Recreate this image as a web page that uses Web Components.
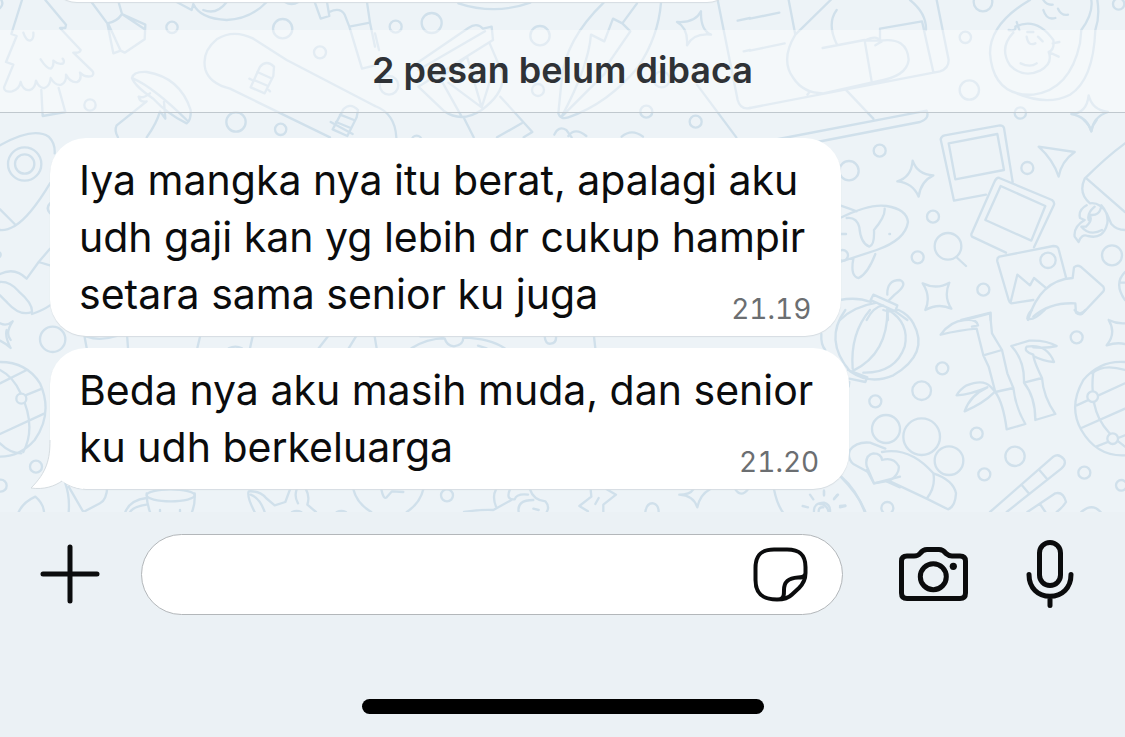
<!DOCTYPE html>
<html lang="id">
<head>
<meta charset="utf-8">
<meta name="viewport" content="width=device-width, initial-scale=1">
<title>Chat</title>
<style>
  body { margin: 0; background: #ebf1f5; font-family: Inter, "Liberation Sans", sans-serif; color: #0b0c0d; }
</style>
</head>
<body>
<chat-screen>
  <chat-bubble></chat-bubble>
  <unread-banner>2 pesan belum dibaca</unread-banner>
  <chat-bubble time="21.19">Iya mangka nya itu berat, apalagi aku<br>udh gaji kan yg lebih dr cukup hampir<br>setara sama senior ku juga</chat-bubble>
  <chat-bubble time="21.20" tail>Beda nya aku masih muda, dan senior<br>ku udh berkeluarga</chat-bubble>
  <chat-composer slot="footer"></chat-composer>
</chat-screen>

<template id="wallpaper">
  <style>
    :host { display: block; overflow: hidden; }
    svg { display: block; width: 100%; height: 100%; fill: none; stroke: #d0e0eb; stroke-width: 7; stroke-linecap: round; stroke-linejoin: round; }
  </style>
  <svg viewBox="0 0 1125 512" preserveAspectRatio="xMinYMax slice" aria-hidden="true">
    <!-- tree, brush, mushroom, skateboard -->
    <g transform="scale(.33333)">
      <path d="M66 0L34 102L50 108L18 186L40 194L12 262Q12 278 36 274Q58 268 62 246Q70 274 90 270Q106 264 108 242Q118 266 134 264Q150 258 152 234Q166 258 184 254Q200 246 198 224Q212 250 232 246Q246 238 240 218Q256 234 276 228Q284 220 276 212L220 158Q240 160 242 150L180 84H196L198 74L136 0"/>
      <path d="M70 98Q78 122 90 122Q102 118 100 98M122 178Q140 206 152 206Q162 200 160 182Q176 196 190 190Q194 182 188 176M124 270L128 348L196 336L176 264M0 24Q12 14 4 0"/>
      <path d="M270 0L322 70L340 160L362 152L374 158L434 118L436 74L366 42L354 0M322 70Q350 66 366 42L432 86M326 74L362 152"/>
      <path d="M396 234Q400 214 440 216Q540 232 572 330Q574 360 560 370Q500 340 460 296Q406 260 396 234ZM400 236Q460 262 560 360M450 280Q430 296 416 290Q420 308 440 304L350 376Q342 392 354 412M440 412Q470 370 480 334L496 356L492 306"/>
      <path d="M760 116Q700 86 650 118Q604 156 616 208Q628 250 690 266L990 412M760 116L860 180L1125 318M780 200Q800 178 822 200L820 228L794 280L752 262ZM772 216L812 234M762 240L804 258M748 236L756 240M806 270L810 274M1030 328Q1050 306 1074 330L1070 352L1042 408L998 388ZM1020 344L1062 360M1008 366L1052 384M992 366L1058 402"/>
      <path d="M530 6L575 30L580 12Q600 56 680 60Q750 58 800 6M610 30Q650 46 680 6M855 6Q875 18 895 6M942 0L962 56L988 48L980 0M988 36Q1020 20 1034 44L1048 80L1110 68L1100 0M1048 80L1086 206L1125 196M1110 68L1125 140"/>
      <circle cx="516" cy="82" r="17"/><circle cx="848" cy="86" r="29"/><circle cx="960" cy="157" r="18"/><circle cx="270" cy="315" r="17"/><circle cx="708" cy="366" r="29"/><circle cx="842" cy="388" r="17"/>
    </g>
    <!-- cup, rocket, sparkle -->
    <g transform="translate(375 0) scale(.33333)">
      <path d="M250 10Q360 46 466 8M110 200L280 84Q306 66 324 86L350 80L354 120L130 260M130 210L330 94M130 260L208 334Q260 370 320 330Q400 270 378 210L344 130M196 236L260 350M276 170L320 322L220 248M276 170L190 240M320 322L346 240M0 318Q60 340 64 412M268 356L296 412M376 290L472 396L446 412M366 412L440 370"/>
      <path d="M686 8Q570 120 560 240L550 340Q556 360 580 352Q700 310 790 200Q850 110 858 8M786 10L742 70L714 56L688 124L648 104Q640 200 560 350M742 70L766 94L700 190L690 220L560 350"/>
      <path d="M906 66Q960 70 978 34Q976 90 1008 104Q956 98 936 136Q940 84 906 66ZM1028 0L1088 300Q1096 330 1125 324M1088 62L1125 54M1106 154L1125 150M966 254L1084 412M538 404Q550 376 574 390L590 412M580 408Q600 380 634 408M740 410Q770 384 804 410M0 100L12 150"/>
      <circle cx="62" cy="80" r="18"/><circle cx="170" cy="69" r="30"/><circle cx="495" cy="107" r="29"/><circle cx="42" cy="256" r="28"/><circle cx="489" cy="270" r="18"/><circle cx="814" cy="335" r="18"/><circle cx="962" cy="365" r="18"/><circle cx="860" cy="238" r="24"/><circle cx="125" cy="422" r="15"/>
    </g>
    <!-- laptop, peanut -->
    <g transform="translate(750 0) scale(.33333)">
      <path d="M116 0L136 104L242 0M0 56L88 38M0 152L104 130M136 104Q90 180 130 234Q160 280 220 280L380 244Q470 230 476 180Q472 110 390 122L344 122L366 250M218 144L344 120M260 30Q230 70 260 132M344 122Q380 104 390 122L390 86L516 64L550 216M376 136L396 124M480 0Q530 40 528 90M560 0L596 180Q596 206 570 214L0 324M172 284L180 274M290 272L370 356M70 420L530 332Q540 356 510 366L170 432"/>
      <path d="M840 0Q720 70 720 160Q730 290 850 284Q960 270 990 130L994 90Q1030 40 1024 0M1042 0Q1050 50 1036 90Q1030 240 960 284Q890 320 790 276M776 90Q800 94 796 80Q860 50 910 120Q914 150 896 156Q910 190 870 212Q820 236 780 196Q746 144 790 98M800 66L808 90M908 130L928 126M896 156L926 170M830 110Q834 140 856 130M832 96H850M864 110L878 124M812 190Q840 204 860 190M880 0Q890 16 908 14M880 30Q890 62 916 54M924 26Q934 48 954 44"/>
      <circle cx="699" cy="6" r="28"/><circle cx="646" cy="112" r="17"/><circle cx="658" cy="270" r="29"/><circle cx="811" cy="339" r="17"/><circle cx="1106" cy="12" r="17"/>
      <path d="M964 342Q1010 340 1016 286Q1026 330 1074 336Q1030 350 1024 394Q1010 350 964 342Z"/>
    </g>
    <!-- photos, plane, magnifier, picture, arrow, rocket nose -->
    <g transform="translate(820 120) scale(.33333)">
      <path d="M374 46L540 16Q550 16 552 24L578 186M498 224L402 242L362 58Q364 48 374 46M386 70L532 42L552 150L406 178ZM538 174L696 240Q704 246 702 254L642 382M558 398L456 350Q452 344 456 338L522 188Q530 170 538 174M542 198L676 258L634 362L496 300ZM656 80L764 96Q724 124 716 170Q700 120 656 80Z"/>
      <path d="M232 184Q274 172 278 122Q292 164 340 166Q302 184 296 230Q278 188 232 184ZM308 490Q350 510 388 488Q370 530 394 566Q356 548 316 570Q334 530 308 490ZM792 0Q808 14 814 34Q818 14 830 0"/>
      <path d="M60 256Q90 266 110 274M60 294Q150 250 200 258Q260 268 264 306Q256 360 170 390L60 426M80 294Q110 290 118 322Q122 370 148 380Q164 376 162 330Q196 290 194 266M100 416Q90 470 116 474Q144 460 166 402M62 342H78M208 342H210"/>
      <path d="M412 414L438 438M538 410L700 378Q714 378 716 388L738 472M640 540L574 550Q568 548 566 540L532 424Q530 414 538 410M572 546L592 464L630 496L642 474L676 502M624 600Q660 480 758 474L762 442Q772 434 782 440L850 500Q854 508 850 514L786 582Q776 586 768 578L766 550Q690 546 640 590"/>
      <path d="M915 70Q860 110 794 176Q774 220 810 250Q840 246 860 280L874 312Q890 330 915 330M800 176L915 276M800 256Q774 270 780 294L794 300Q760 320 764 350L776 366Q784 340 804 348Q850 360 862 310Q866 280 844 256Q840 290 808 284Q820 300 798 320H784Q810 350 846 330M824 260Q800 280 806 300"/>
      <path d="M202 524Q200 480 240 480Q266 492 224 524L206 542M152 540L160 524L232 556L226 574ZM60 540Q110 530 152 546M170 548Q100 560 60 600M202 566L204 600M140 600Q160 560 190 556M226 574L262 600M424 600L512 578V600M915 456Q880 490 915 540M900 488H915"/>
      <circle cx="384" cy="379" r="40"/><circle cx="684" cy="421" r="23"/><circle cx="87" cy="152" r="29"/><circle cx="179" cy="92" r="18"/><circle cx="339" cy="290" r="18"/><circle cx="293" cy="412" r="18"/><circle cx="622" cy="144" r="18"/><circle cx="490" cy="509" r="18"/><circle cx="876" cy="406" r="30"/><circle cx="68" cy="406" r="16"/>
    </g>
    <!-- lantern, bamboo, ball, bandage, pencils -->
    <g transform="translate(820 310) scale(.33333)">
      <path d="M76 0Q10 90 90 184Q150 226 220 196Q330 130 280 40Q266 14 236 0M202 0Q204 130 100 182M150 0Q90 70 98 176M206 0Q270 40 254 110Q226 190 130 188M84 180L142 202L136 216L88 206M4 72Q2 104 16 120M86 230L88 216M190 0Q210 8 232 0"/>
      <path d="M362 74Q390 34 434 30L510 10L516 70L546 120L490 136L470 56Q420 60 362 74M434 30Q470 26 474 46L456 50M490 136L506 170L526 246L580 234L562 190L546 120M526 246Q550 280 560 358L616 342Q586 290 580 234M526 246L512 230Q490 206 440 226Q420 238 410 256Q450 254 502 232Q450 256 434 304Q490 280 522 248M574 108L628 92Q680 90 710 108Q680 116 640 112M574 108Q614 150 612 218L666 204Q640 150 640 134Q610 124 620 110Q680 100 702 156Q670 154 640 138M612 218Q646 260 646 330L706 312Q670 260 666 204"/>
      <path d="M915 156Q840 150 790 210Q744 290 784 360Q830 440 915 436M770 286L915 220M784 354L915 296M820 184Q810 270 838 326Q860 370 915 410M816 190Q850 160 915 180M828 410L915 376M866 30Q890 42 915 40M866 30Q890 70 860 106Q890 96 915 102M622 26Q624 10 636 0M622 26Q640 34 674 0M764 0Q780 20 796 0"/>
      <path d="M144 486L100 462Q80 444 90 420Q110 394 150 398L196 416M186 426Q270 410 340 490Q348 530 320 566L210 514M340 490Q400 510 408 550Q406 590 384 598L320 566M162 520L140 468Q134 436 160 430Q184 430 186 450Q220 440 236 468Q240 490 210 512Z"/>
      <path d="M510 606L700 440Q716 428 732 448Q740 462 724 476L560 606M658 480L682 508M606 526L628 552M622 606L706 550Q730 544 738 576Q730 590 710 606M660 582L676 606M64 500Q110 540 134 606M12 542V556M52 554L42 566M60 588L76 586M0 582Q20 582 26 606M784 606Q816 578 842 606"/>
      <circle cx="198" cy="357" r="42"/><circle cx="305" cy="380" r="55"/><circle cx="387" cy="452" r="43"/><circle cx="367" cy="175" r="18"/><circle cx="305" cy="242" r="28"/><circle cx="166" cy="274" r="18"/><circle cx="770" cy="82" r="18"/><circle cx="470" cy="371" r="18"/><circle cx="585" cy="439" r="29"/><circle cx="493" cy="493" r="18"/><circle cx="793" cy="488" r="18"/><circle cx="904" cy="526" r="16"/><circle cx="202" cy="594" r="18"/>
      <g fill="#edf3f7"><circle cx="818" cy="260" r="16"/><circle cx="878" cy="386" r="16"/></g>
    </g>
    <!-- fish and leaves on the left edge -->
    <g transform="translate(0 120) scale(.33333)">
      <path d="M0 76Q100 20 146 50Q166 70 164 100M150 190Q90 290 44 318Q20 332 0 330M0 268L44 312M150 386L116 426L80 476Q44 440 0 462M116 426L150 436M0 486Q30 484 56 514Q98 550 96 576Q60 590 22 548L0 526M96 582Q130 570 150 556M0 610Q20 620 38 604Q14 640 32 660M150 250Q136 264 150 280M0 398Q4 404 0 410"/>
      <circle cx="74" cy="132" r="50"/><circle cx="74" cy="132" r="29"/><circle cx="158" cy="658" r="38"/>
    </g>
    <g transform="translate(0 330) scale(.33333)">
      <path d="M20 0Q14 20 32 54Q20 42 0 32M0 96Q80 96 120 160Q160 250 104 330Q60 380 0 380M0 160L80 120M76 196L126 176M0 312L134 250M0 120Q40 140 62 190Q110 290 70 366M0 340Q30 370 64 370M56 546Q70 516 106 500Q130 520 132 546M196 460Q210 500 206 546M206 470L250 546L300 520Q320 510 322 470M250 0L260 54M380 0L384 54M260 20Q300 34 350 18M600 20L592 54M376 546Q390 510 440 504M440 490Q440 520 450 546M584 490Q586 520 576 546M480 546V540M540 546V540M390 546Q400 530 440 524"/>
      <ellipse cx="512" cy="496" rx="72" ry="18"/><circle cx="108" cy="410" r="18"/><circle cx="2" cy="467" r="18"/>
      <circle cx="64" cy="206" r="15" fill="#edf3f7"/>
    </g>
    <!-- slivers below and between the bubbles -->
    <g transform="translate(200 470) scale(.33333)">
      <path d="M164 126Q140 80 146 64Q180 62 198 84L224 106L256 96L270 58M152 74Q180 84 194 126M290 58Q282 80 294 100M318 58Q330 80 322 104L348 126M460 58Q470 100 514 126M670 58Q660 100 620 126M544 58Q550 90 560 82L576 64L610 66M792 126Q840 118 880 120L934 90M888 58Q876 80 888 110M930 58Q916 90 944 88Q950 70 984 74M1000 90Q950 90 956 126M990 58Q1000 90 1036 94Q1050 110 1040 126M1000 116L1016 120M276 126Q290 120 304 126M410 126Q424 120 438 126"/>
      <circle cx="741" cy="76" r="18"/>
    </g>
    <g transform="translate(550 470) scale(.33333)">
      <path d="M122 58L124 80L88 108L114 124M170 58L198 74L160 104V126M136 102L146 84M388 74Q420 74 430 58M480 58Q450 74 442 112Q430 76 388 74M286 126Q290 98 310 100Q326 104 326 126M556 58Q574 84 594 58M672 58Q680 100 698 126M870 18Q930 80 946 126M822 62V76M780 74L790 88M864 74L852 88M758 108L774 112M886 108L870 112M792 126Q790 98 822 98Q842 104 840 126M806 124Q806 110 820 112M950 0L972 40L1050 20M1010 34L1050 52"/>
    </g>
    <g transform="translate(200 325) scale(.33333)">
      <path d="M158 34L150 70M86 70Q106 60 126 70M384 34L356 70M468 34L446 70M524 34L530 70M634 70Q680 40 734 40Q740 62 762 64Q790 60 790 38Q870 40 914 70M660 34H730M834 62L860 70M1034 34Q1036 58 1052 56Q1070 54 1068 34M1182 34L1186 70"/>
    </g>
  </svg>
</template>

<template id="screen">
  <style>
    :host { display: flex; flex-direction: column; min-height: 100vh; }
    main { position: relative; flex: 1 0 0; display: flex; flex-direction: column; justify-content: flex-end; overflow: hidden; background: #edf3f7; min-height: 480px; }
    chat-wallpaper { position: absolute; inset: 0; }
    .thread { position: relative; display: flex; flex-direction: column; gap: 12px; padding-bottom: 23px; }
  </style>
  <main>
    <chat-wallpaper></chat-wallpaper>
    <div class="thread"><slot></slot></div>
  </main>
  <slot name="footer"></slot>
</template>

<template id="banner">
  <style>
    :host { display: block; margin: 16px 0 13px; padding: 20px 0 21px; border-bottom: 1px solid #c0c8ce; background: rgba(255,255,255,.4); text-align: center; }
    h2 { margin: 0; font-size: 36px; line-height: 41px; font-weight: 600; color: #2f3236; }
  </style>
  <h2><slot></slot></h2>
</template>

<template id="bubble">
  <style>
    :host { position: relative; isolation: isolate; display: grid; width: fit-content; min-height: 27px; min-width: 625px; margin-left: 50px; padding: 14px 30px 13px 29px; border-radius: 36px; background: #fff; box-shadow: 0 1px 1px #d5dce1; }
    p { grid-area: 1 / 1; margin: 0; padding-right: 6px; font-size: 41px; line-height: 57px; }
    time { grid-area: 1 / 1; place-self: end; font-size: 28px; line-height: 28px; font-variant-numeric: tabular-nums; color: #6b6e71; }
    svg { display: none; position: absolute; z-index: -1; left: -19px; bottom: -1px; fill: #fff; }
    :host([tail]) svg { display: block; }
  </style>
  <svg width="60" height="50" viewBox="0 0 60 50" aria-hidden="true"><path d="M19 0C19 19 16 32 0 48C13 50 24 46 31 41Q40 47 52 49L60 0Z"/><path d="M19 0C19 19 16 32 0 48C13 50 24 46 31 41" fill="none" stroke="#d5dce1"/></svg>
  <p><slot></slot></p>
  <time></time>
</template>

<template id="composer">
  <style>
    :host { display: block; padding: 22px 0 23px; background: #ebf1f5; }
    form { display: flex; align-items: center; padding: 0 51px 0 40px; margin: 0; }
    button { flex: none; display: block; padding: 0; border: 0; background: none; color: #0b0c0d; }
    form > button { padding-bottom: 2px; }
    svg { display: block; fill: none; stroke: currentColor; stroke-width: 5; stroke-linecap: round; stroke-linejoin: round; }
    .field { flex: 1; min-width: 0; display: flex; align-items: center; box-sizing: border-box; height: 81px; margin: 0 56px 0 41px; padding: 0 34px 0 40px; border: 1px solid #b3b7ba; border-radius: 41px; background: #fff; }
    .field svg { stroke-width: 4; }
    input { flex: 1; min-width: 0; height: 57px; padding: 0; border: 0; outline: 0; background: none; font: 41px Inter, sans-serif; }
    .camera { margin-right: 58px; }
    .home { width: 402px; max-width: 60%; height: 15px; margin: 84px auto 0; border-radius: 8px; background: #000; }
  </style>
  <form>
    <button type="button" aria-label="Lampirkan"><svg width="60" height="60" viewBox="0 0 60 60"><path d="M30 3V57M3 30H57"/></svg></button>
    <div class="field">
      <input type="text" aria-label="Pesan">
      <button type="button" aria-label="Stiker"><svg width="55" height="55" viewBox="0 0 55 55"><path d="M24 52.5C9 52.5 2.5 46 2.5 33V21C2.5 8 8 2.5 21 2.5H34C47 2.5 52.5 8 52.5 20V26C52.5 33 50 37 46 41L39 47.500C35 51.500 31 52.500 24 52.500Z"/><path d="M52 28C51 30 49 30.500 45 30.500C35 31 31 35 31 43C31 48 31 50 28 52"/></svg></button>
    </div>
    <button class="camera" type="button" aria-label="Kamera"><svg width="69" height="54" viewBox="0 0 69 54"><path d="M8 9H15Q19 9 21 6.500Q24 2.500 28 2.500H40Q44 2.500 47 6.500Q50 9 53 9H61Q66.500 9 66.500 14V46Q66.500 51.500 61 51.500H8Q2.500 51.500 2.500 46V14Q2.500 9 8 9Z"/><circle cx="34.300" cy="29.700" r="13"/><circle cx="54.300" cy="19.300" r="3.600" fill="currentColor" stroke="none"/></svg></button>
    <button type="button" aria-label="Pesan suara"><svg width="48" height="68" viewBox="0 0 48 68"><rect x="13.500" y="2.500" width="21" height="43" rx="10.500"/><path d="M3 34.500C3 48 12 56.300 24 56.300S45 48 45 34.500M24 57V65.500"/></svg></button>
  </form>
  <div class="home"></div>
</template>

<script>
  class TemplateElement extends HTMLElement {
    constructor() {
      super();
      this.attachShadow({ mode: "open" }).append(
        document.getElementById(this.constructor.template).content.cloneNode(true));
    }
  }
  customElements.define("chat-wallpaper", class extends TemplateElement { static template = "wallpaper"; });
  customElements.define("unread-banner", class extends TemplateElement { static template = "banner"; });
  customElements.define("chat-composer", class extends TemplateElement { static template = "composer"; });
  customElements.define("chat-bubble", class extends TemplateElement {
    static template = "bubble";
    connectedCallback() {
      const time = this.shadowRoot.querySelector("time");
      if (this.hasAttribute("time")) {
        time.textContent = this.getAttribute("time");
        time.dateTime = time.textContent.replace(".", ":");
      } else time.remove();
    }
  });
  customElements.define("chat-screen", class extends TemplateElement { static template = "screen"; });
</script>
</body>
</html>
